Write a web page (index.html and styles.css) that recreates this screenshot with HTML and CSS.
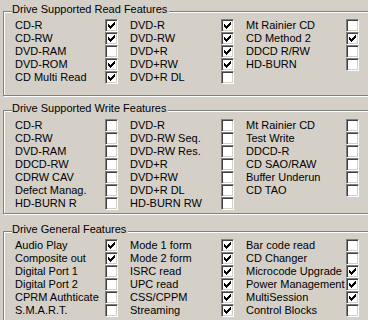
FILE: index.html
```html
<!DOCTYPE html>
<html>
<head>
<meta charset="utf-8">
<link rel="stylesheet" href="styles.css">
</head>
<body>
<div class="page">
  <section class="group g1">
    <div class="legend">Drive Supported Read Features</div>
    <div class="grid">
      <span class="lbl">CD-R</span><span class="cb on"></span>
      <span class="lbl">DVD-R</span><span class="cb on"></span>
      <span class="lbl">Mt Rainier CD</span><span class="cb"></span>

      <span class="lbl">CD-RW</span><span class="cb on"></span>
      <span class="lbl">DVD-RW</span><span class="cb on"></span>
      <span class="lbl">CD Method 2</span><span class="cb on"></span>

      <span class="lbl">DVD-RAM</span><span class="cb"></span>
      <span class="lbl">DVD+R</span><span class="cb on"></span>
      <span class="lbl">DDCD R/RW</span><span class="cb"></span>

      <span class="lbl">DVD-ROM</span><span class="cb on"></span>
      <span class="lbl">DVD+RW</span><span class="cb on"></span>
      <span class="lbl">HD-BURN</span><span class="cb"></span>

      <span class="lbl">CD Multi Read</span><span class="cb on"></span>
      <span class="lbl">DVD+R DL</span><span class="cb"></span>
    </div>
  </section>

  <section class="group g2">
    <div class="legend">Drive Supported Write Features</div>
    <div class="grid">
      <span class="lbl">CD-R</span><span class="cb"></span>
      <span class="lbl">DVD-R</span><span class="cb"></span>
      <span class="lbl">Mt Rainier CD</span><span class="cb"></span>

      <span class="lbl">CD-RW</span><span class="cb"></span>
      <span class="lbl">DVD-RW Seq.</span><span class="cb"></span>
      <span class="lbl">Test Write</span><span class="cb"></span>

      <span class="lbl">DVD-RAM</span><span class="cb"></span>
      <span class="lbl">DVD-RW Res.</span><span class="cb"></span>
      <span class="lbl">DDCD-R</span><span class="cb"></span>

      <span class="lbl">DDCD-RW</span><span class="cb"></span>
      <span class="lbl">DVD+R</span><span class="cb"></span>
      <span class="lbl">CD SAO/RAW</span><span class="cb"></span>

      <span class="lbl">CDRW CAV</span><span class="cb"></span>
      <span class="lbl">DVD+RW</span><span class="cb"></span>
      <span class="lbl">Buffer Underun</span><span class="cb"></span>

      <span class="lbl">Defect Manag.</span><span class="cb"></span>
      <span class="lbl">DVD+R DL</span><span class="cb"></span>
      <span class="lbl">CD TAO</span><span class="cb"></span>

      <span class="lbl">HD-BURN R</span><span class="cb"></span>
      <span class="lbl">HD-BURN RW</span><span class="cb"></span>
    </div>
  </section>

  <section class="group g3">
    <div class="legend">Drive General Features</div>
    <div class="grid">
      <span class="lbl">Audio Play</span><span class="cb on"></span>
      <span class="lbl">Mode 1 form</span><span class="cb on"></span>
      <span class="lbl">Bar code read</span><span class="cb"></span>

      <span class="lbl">Composite out</span><span class="cb on"></span>
      <span class="lbl">Mode 2 form</span><span class="cb on"></span>
      <span class="lbl">CD Changer</span><span class="cb"></span>

      <span class="lbl">Digital Port 1</span><span class="cb"></span>
      <span class="lbl">ISRC read</span><span class="cb on"></span>
      <span class="lbl">Microcode Upgrade</span><span class="cb on"></span>

      <span class="lbl">Digital Port 2</span><span class="cb"></span>
      <span class="lbl">UPC read</span><span class="cb on"></span>
      <span class="lbl">Power Management</span><span class="cb on"></span>

      <span class="lbl">CPRM Authticate</span><span class="cb"></span>
      <span class="lbl">CSS/CPPM</span><span class="cb on"></span>
      <span class="lbl">MultiSession</span><span class="cb on"></span>

      <span class="lbl">S.M.A.R.T.</span><span class="cb"></span>
      <span class="lbl">Streaming</span><span class="cb on"></span>
      <span class="lbl">Control Blocks</span><span class="cb"></span>
    </div>
  </section>
</div>
</body>
</html>
```

FILE: styles.css
```css
html, body {
  margin: 0;
  padding: 0;
  overflow: hidden;
  background: #d4d0c8;
}

body {
  width: 368px;
  height: 320px;
  font-family: "Liberation Sans", Arial, sans-serif;
  font-size: 11px;
  line-height: 13px;
  color: #000;
}

.page {
  display: flex;
  flex-direction: column;
  box-sizing: border-box;
  width: 368px;
  height: 320px;
  padding: 11px 0 0 3px;
  overflow: hidden;
}

.group {
  display: flex;
  flex-direction: column;
  flex: none;
  width: 380px;
  border: 1px solid #808080;
  box-shadow: inset 1px 1px 0 #fff, 1px 1px 0 #fff;
}

.g1 { padding-bottom: 11px; }
.g2 { margin-top: 14px; padding-bottom: 3px; }
.g3 { margin-top: 17px; padding-bottom: 10px; }

.legend {
  align-self: flex-start;
  margin: -9px 0 0 8px;
  padding: 0 2px 0 0;
  background: #d4d0c8;
  white-space: nowrap;
}

.grid {
  display: grid;
  grid-template-columns: 90px 25px 91px 25px 100px 13px;
  grid-auto-rows: 13px;
  margin: 3px 0 0 11px;
}

.g2 .grid { margin-top: 4px; }

.lbl {
  white-space: nowrap;
}

.cb {
  display: block;
  width: 13px;
  height: 13px;
  box-sizing: border-box;
  border: 1px solid;
  border-color: #808080 #fff #fff #808080;
  background: #fff;
  box-shadow: inset 1px 1px 0 #404040, inset -1px -1px 0 #d4d0c8;
}

.cb.on::after {
  content: "";
  display: block;
  width: 1px;
  height: 1px;
  margin: 2px 0 0 2px;
  background: transparent;
  box-shadow:
    6px 0 #000,
    5px 1px #000, 6px 1px #000,
    0 2px #000, 4px 2px #000, 5px 2px #000, 6px 2px #000,
    0 3px #000, 1px 3px #000, 3px 3px #000, 4px 3px #000, 5px 3px #000,
    0 4px #000, 1px 4px #000, 2px 4px #000, 3px 4px #000, 4px 4px #000,
    1px 5px #000, 2px 5px #000, 3px 5px #000,
    2px 6px #000;
}
```
